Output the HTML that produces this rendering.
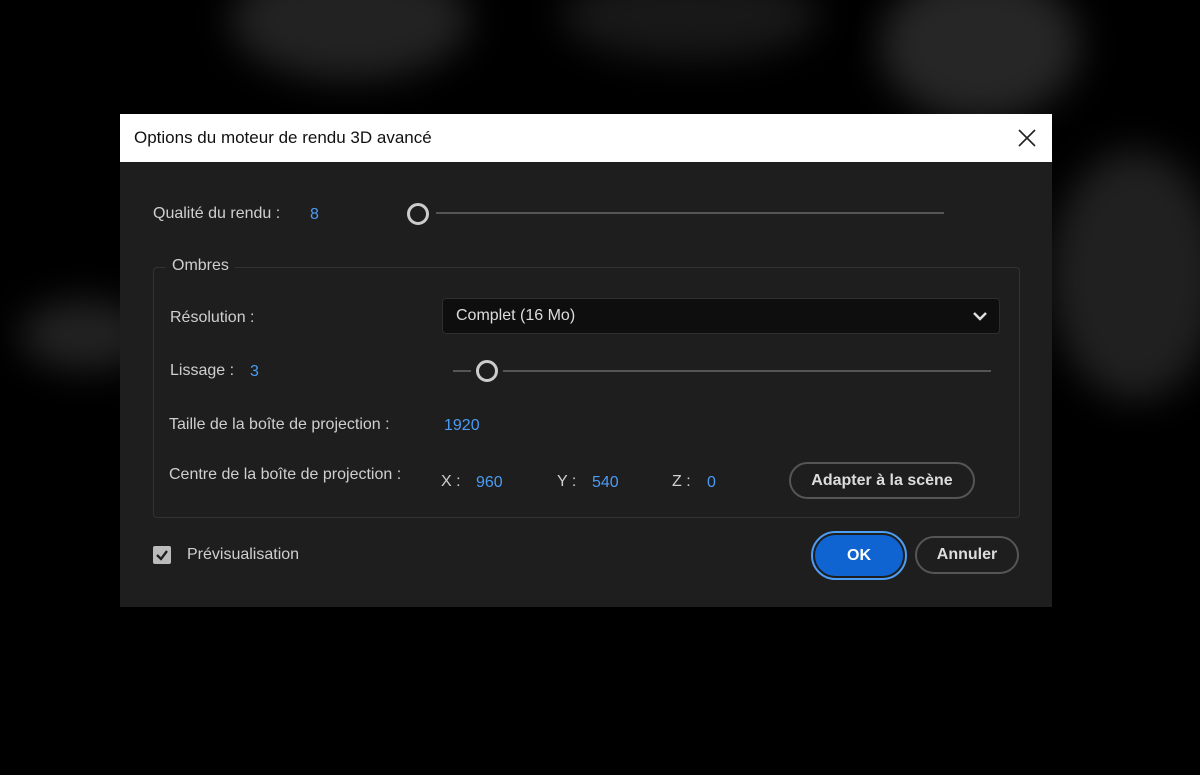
<!DOCTYPE html>
<html><head><meta charset="utf-8"><style>
body{margin:0;width:1200px;height:775px;background:#000;position:relative;overflow:hidden;font-family:"Liberation Sans",sans-serif;}
.bg{position:absolute;border-radius:50%;filter:blur(18px);}
.dlg{position:absolute;left:120px;top:114px;width:932px;height:493px;background:#1e1e1e;}
.title{height:48px;background:#fff;color:#111;font-size:17px;line-height:48px;padding-left:14px;position:relative;}
.a{position:absolute;color:#cfcfcf;font-size:16px;white-space:nowrap;}
.b{position:absolute;color:#4b9cf5;font-size:16px;}
.track{position:absolute;height:2px;background:#555;}
.knob{position:absolute;width:22px;height:22px;border:3px solid #ccc;border-radius:50%;background:#1e1e1e;box-sizing:border-box;}
</style></head><body>
<div class="bg" style="left:230px;top:-40px;width:240px;height:120px;background:#222;"></div>
<div class="bg" style="left:880px;top:-30px;width:200px;height:150px;background:#262626;"></div>
<div class="bg" style="left:1050px;top:150px;width:170px;height:250px;background:#202020;"></div>
<div class="bg" style="left:20px;top:300px;width:130px;height:70px;background:#222;"></div>
<div class="bg" style="left:560px;top:-30px;width:260px;height:90px;background:#181818;"></div>
<div class="dlg">
<div class="title">Options du moteur de rendu 3D avancé
<svg style="position:absolute;right:16px;top:15px" width="18" height="18"><path d="M1 1L17 17M17 1L1 17" stroke="#222" stroke-width="1.6"/></svg></div>
<div class="a" style="left:33px;top:91px">Qualité du rendu :</div><div class="b" style="left:190px;top:92px">8</div>
<div class="track" style="left:316px;top:98px;width:508px"></div><div class="knob" style="left:287px;top:89px"></div>
<div style="position:absolute;left:33px;top:153px;width:865px;height:249px;border:1px solid #333;border-radius:4px;"></div>
<div class="a" style="left:46px;top:143px;background:#1e1e1e;padding:0 6px">Ombres</div>
<div class="a" style="left:50px;top:195px">Résolution :</div>
<div style="position:absolute;left:322px;top:184px;width:558px;height:36px;background:#0e0e0e;border:1px solid #2e2e2e;border-radius:4px;box-sizing:border-box;"></div>
<div class="a" style="left:336px;top:193px;color:#ddd">Complet (16 Mo)</div>
<svg style="position:absolute;left:852px;top:196px" width="16" height="12"><path d="M2 3L8 9L14 3" stroke="#ddd" stroke-width="2.5" fill="none"/></svg>
<div class="a" style="left:50px;top:248px">Lissage :</div><div class="b" style="left:130px;top:249px">3</div>
<div class="track" style="left:333px;top:256px;width:538px"></div><div class="knob" style="left:356px;top:246px;box-shadow:0 0 0 5px #1e1e1e"></div>
<div class="a" style="left:49px;top:302px">Taille de la boîte de projection :</div><div class="b" style="left:324px;top:303px">1920</div>
<div class="a" style="left:49px;top:352px">Centre de la boîte de projection :</div>
<div class="a" style="left:321px;top:359px">X :</div><div class="b" style="left:356px;top:360px">960</div>
<div class="a" style="left:437px;top:359px">Y :</div><div class="b" style="left:472px;top:360px">540</div>
<div class="a" style="left:552px;top:359px">Z :</div><div class="b" style="left:587px;top:360px">0</div>
<div style="position:absolute;left:669px;top:348px;width:186px;height:37px;border:2px solid #555;border-radius:19px;box-sizing:border-box;color:#ddd;font-size:16px;font-weight:bold;text-align:center;line-height:33px;">Adapter à la scène</div>
<div style="position:absolute;left:33px;top:432px;width:18px;height:18px;background:#bbb;border-radius:2px;"></div>
<svg style="position:absolute;left:33px;top:432px" width="18" height="18"><path d="M4 9L8 13L14 5" stroke="#1e1e1e" stroke-width="2.3" fill="none"/></svg>
<div class="a" style="left:67px;top:432px">Prévisualisation</div>
<div style="position:absolute;left:691px;top:417px;width:96px;height:49px;border:2px solid #4d9ef5;border-radius:25px;box-sizing:border-box;padding:2px;"><div style="background:#0f64d2;height:100%;border-radius:22px;color:#fff;font-weight:bold;font-size:16px;text-align:center;line-height:41px;">OK</div></div>
<div style="position:absolute;left:795px;top:422px;width:104px;height:38px;border:2px solid #555;border-radius:19px;box-sizing:border-box;color:#ddd;font-weight:bold;font-size:16px;text-align:center;line-height:34px;">Annuler</div>
</div>
</body></html>
